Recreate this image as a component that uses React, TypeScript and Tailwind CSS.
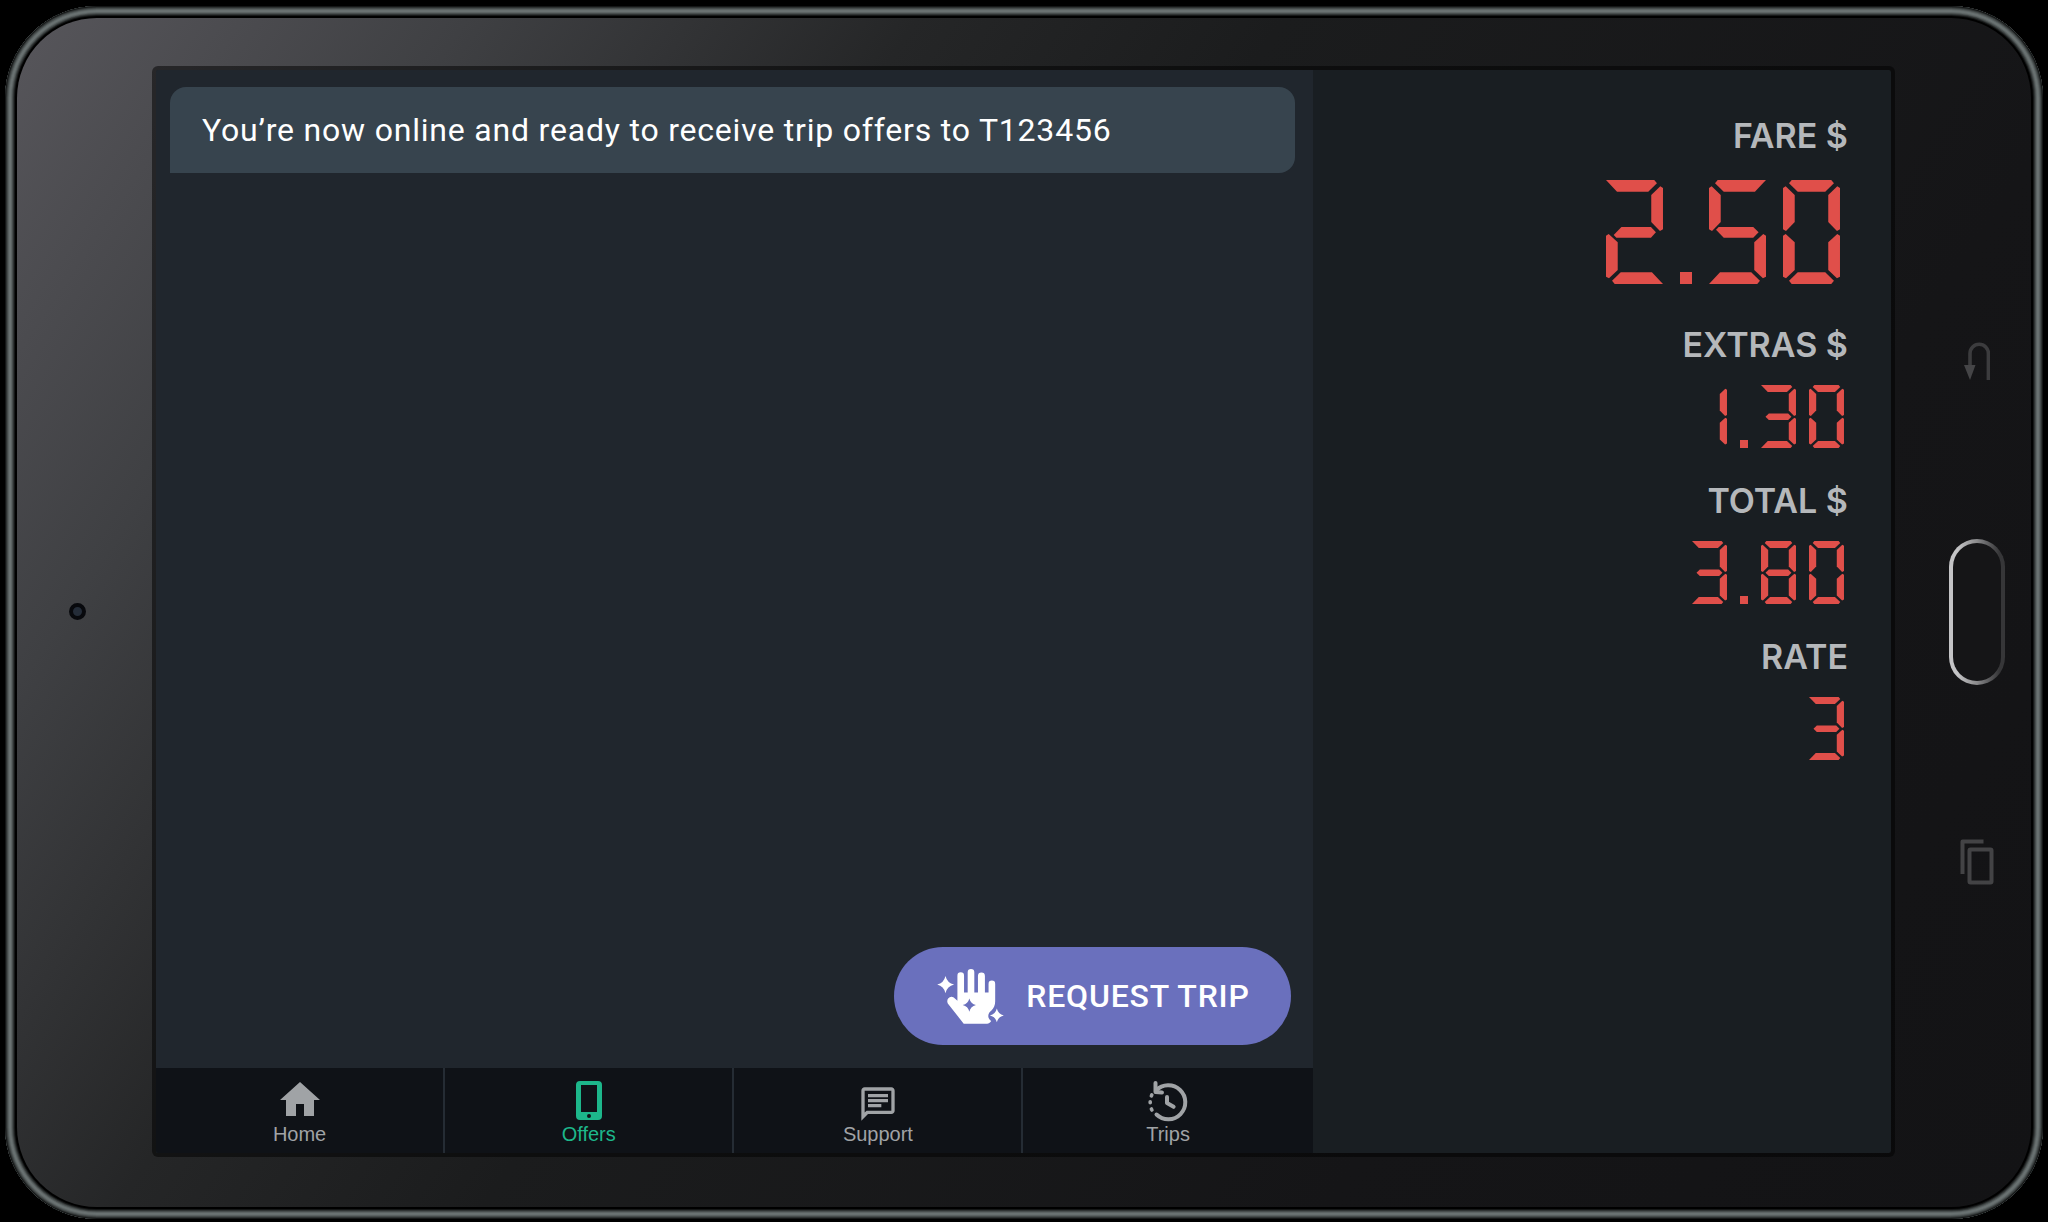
import React from "react";
import { MdHome, MdOutlineChat } from "react-icons/md";

type Point = [number, number];

const DIGIT_W = 170;
const DIGIT_H = 312;

const segments: Record<string, Point[]> = {
  top: [[18, 10], [26, 0], [144, 0], [152, 10], [126, 35], [44, 35]],
  topOpenLeft: [[0, 0], [144, 0], [152, 10], [126, 35], [33, 35]],
  topOpenRight: [[18, 10], [26, 0], [170, 0], [137, 35], [44, 35]],
  upperLeft: [[0, 24], [8, 19], [35, 45], [35, 126], [9, 153], [0, 148]],
  upperRight: [[170, 24], [162, 19], [135, 45], [135, 126], [161, 153], [170, 148]],
  middle: [[22, 157], [38, 141], [132, 141], [148, 157], [132, 173], [38, 173]],
  middleRising: [[23, 165], [46, 141], [134, 141], [149, 157], [134, 173], [31, 173]],
  middleFalling: [[21, 149], [29, 141], [132, 141], [148, 157], [132, 173], [44, 173]],
  lowerLeft: [[0, 167], [8, 162], [35, 187], [35, 270], [9, 295], [0, 290]],
  lowerRight: [[170, 167], [162, 162], [135, 187], [135, 270], [161, 295], [170, 290]],
  bottom: [[18, 302], [26, 312], [144, 312], [152, 302], [126, 277], [44, 277]],
  bottomOpenLeft: [[0, 312], [144, 312], [152, 302], [126, 277], [33, 277]],
  bottomOpenRight: [[18, 302], [26, 312], [170, 312], [137, 277], [44, 277]],
};

const lit: Record<string, string[]> = {
  "0": ["top", "upperLeft", "upperRight", "lowerLeft", "lowerRight", "bottom"],
  "1": ["upperRight", "lowerRight"],
  "2": ["topOpenLeft", "upperRight", "middleRising", "lowerLeft", "bottomOpenRight"],
  "3": ["topOpenLeft", "upperRight", "middle", "lowerRight", "bottomOpenLeft"],
  "5": ["topOpenRight", "upperLeft", "middleFalling", "lowerRight", "bottomOpenLeft"],
  "8": ["top", "upperLeft", "upperRight", "middle", "lowerLeft", "lowerRight", "bottom"],
};

function toClipPath(points: Point[]) {
  return `polygon(${points.map(([x, y]) => `${(x / DIGIT_W) * 100}% ${(y / DIGIT_H) * 100}%`).join(", ")})`;
}

function Readout({ value, large = false }: { value: string; large?: boolean }) {
  return (
    <dd>
      <span
        role="img"
        aria-label={value}
        className={large ? "flex items-end gap-[17px] pr-2" : "flex items-end gap-[13px] pr-1"}
      >
        {value.split("").map((char, i) =>
          char === "." ? (
            <span key={i} className={large ? "size-3 bg-[#e04f4a]" : "size-2 bg-[#e04f4a]"} />
          ) : (
            <span key={i} className={large ? "grid h-[104px] w-[57px]" : "grid h-[63px] w-[35px]"}>
              {lit[char].map((name) => (
                <span
                  key={name}
                  className="col-start-1 row-start-1 bg-[#e04f4a]"
                  style={{ clipPath: toClipPath(segments[name]) }}
                />
              ))}
            </span>
          )
        )}
      </span>
    </dd>
  );
}

function MeterRow({ label, value, large = false }: { label: string; value: string; large?: boolean }) {
  return (
    <div className={large ? "flex flex-col items-end gap-6 pb-2" : "flex flex-col items-end gap-5"}>
      <dt className="font-['Inter',sans-serif] text-[34px] leading-10 font-semibold text-[#b5b8bb]">{label}</dt>
      <Readout value={value} large={large} />
    </div>
  );
}

function HandIcon() {
  return (
    <svg aria-hidden viewBox="0 0 201 166" className="h-[55px] w-[67px]">
      <path
        fill="#fff"
        d="M61 72V20a10 10 0 0 1 20 0V71h11V10a10 10 0 0 1 20 0V71h11V21a10 10 0 0 1 21 0V71h11V45a10 10 0 0 1 20 0V97c0 12-4 21-12 29a18 18 0 0 0 0 31l-3 4q-3 4-9 4H80L32 104C26 93 37 78 50 86L61 96Z"
      />
      <path fill="#fff" d="M25 21Q30 42 51 47Q30 52 25 73Q20 52 0 47Q20 42 25 21Z" />
      <path fill="#fff" d="M180 119Q184 136 201 140Q184 144 180 161Q176 144 159 140Q176 136 180 119Z" />
      <path fill="#6a70bd" d="M97 89Q101 105 117 109Q101 113 97 129Q93 113 77 109Q93 105 97 89Z" />
    </svg>
  );
}

function PhoneIcon() {
  return (
    <svg aria-hidden viewBox="0 0 48 48" className="size-12" fill="currentColor">
      <path
        fillRule="evenodd"
        d="M15 5H33a4 4 0 0 1 4 4V40a4 4 0 0 1-4 4H15a4 4 0 0 1-4-4V9a4 4 0 0 1 4-4ZM16 9V36H32V9ZM24 38a2 2 0 1 0 0 4 2 2 0 0 0 0-4Z"
      />
    </svg>
  );
}

function HistoryIcon() {
  return (
    <svg
      aria-hidden
      viewBox="1 0 48 48"
      className="size-12"
      fill="none"
      stroke="currentColor"
      strokeWidth="4"
      strokeLinecap="round"
      strokeLinejoin="round"
    >
      <path d="M13 14.5A17 17 0 1 1 13.5 38.5" />
      <path d="M12.500 7V16L19 16.6" />
      <path strokeWidth="3.6" d="M8.8 18.8L8.4 19.8M7.2 25.8V26.8M8.4 33L8.9 34" />
      <path d="M24 21V27L30.600 30.8" />
    </svg>
  );
}

const tabs = [
  { label: "Home", icon: <MdHome aria-hidden className="size-12" />, active: false },
  { label: "Offers", icon: <PhoneIcon />, active: true },
  { label: "Support", icon: <MdOutlineChat aria-hidden className="size-10" />, active: false },
  { label: "Trips", icon: <HistoryIcon />, active: false },
];

function TabBar() {
  return (
    <nav className="grid grid-cols-4 divide-x-2 divide-[#252c34] bg-[#0f1217]">
      {tabs.map((tab) => (
        <button
          key={tab.label}
          type="button"
          aria-current={tab.active ? "page" : undefined}
          className={
            tab.active
              ? "flex flex-col items-center pt-2 pb-[9px] text-[#1db78b]"
              : "flex flex-col items-center pt-2 pb-[9px] text-[#a0a3a6]"
          }
        >
          <span className="flex h-12 items-end">{tab.icon}</span>
          <span className="font-['Liberation_Sans',sans-serif] text-xl leading-5">{tab.label}</span>
        </button>
      ))}
    </nav>
  );
}

function HardwareKeys() {
  return (
    <div className="flex w-[136px] flex-col items-center justify-center gap-[153px] pl-7">
      <button type="button" aria-label="Back" className="flex size-12 justify-center pt-1">
        <svg aria-hidden viewBox="0 0 26 38" className="h-[38px] w-[26px]">
          <path d="M6 25V11.5a9.2 9.2 0 0 1 18.4 0V38" fill="none" stroke="#3c3c3e" strokeWidth="3.6" />
          <path d="M0 23H11.5L6 38Z" fill="#454547" />
        </svg>
      </button>
      <button
        type="button"
        aria-label="Home"
        className="h-[146px] w-14 rounded-full bg-linear-to-r from-[#c4c4c6] from-15% via-[#8a8a8c] via-50% to-[#363638] to-90% p-1"
      >
        <span className="block size-full rounded-full bg-[#151517]" />
      </button>
      <button type="button" aria-label="Recent apps" className="flex size-12 items-center justify-center">
        <svg aria-hidden viewBox="0 0 34 46" className="h-[46px] w-[34px]" fill="none" stroke="#434345" strokeWidth="4">
          <path d="M2.5 35V2.5H23.5" strokeLinejoin="round" />
          <rect x="9.5" y="10.5" width="22" height="33" rx="1" />
        </svg>
      </button>
    </div>
  );
}

export default function App() {
  return (
    <div className="flex min-h-screen bg-black px-[5px] pt-[6px] pb-[3px]">
      <div className="flex flex-1 rounded-[92px] p-3 shadow-[inset_0_0_0_1px_#141616,inset_0_0_0_2px_#2e3232,inset_0_0_0_3px_#454b4b,inset_0_0_0_4px_#5a6161,inset_0_0_0_5px_#687070,inset_0_0_0_6px_#6a7272,inset_0_0_0_7px_#5d6464,inset_0_0_0_8px_#474d4d,inset_0_0_0_9px_#2f3333,inset_0_0_0_10px_#151717]">
        <div className="flex flex-1 rounded-[80px] bg-[linear-gradient(124deg,#57565b_0%,#3f4043_16%,#252627_32%,#1b1c1d_45%,#151517_75%,#131315_100%)] pt-12 pb-[50px]">
          <div className="flex w-[135px] items-center justify-center pr-[14px]">
            <span className="size-[17px] rounded-full border-4 border-[#08090d] bg-[#242c38]" />
          </div>

          <main className="grid flex-1 grid-cols-3 overflow-hidden rounded-md border-4 border-black/50 bg-[#191e22] bg-clip-padding">
            <section className="col-span-2 flex flex-col bg-[#20262d]">
              <div className="flex flex-1 flex-col justify-between pt-[17px] pr-[18px] pb-[23px] pl-[14px]">
                <p className="rounded-2xl rounded-bl-none bg-[#37444e] px-8 py-[23px] font-['Roboto',sans-serif] text-[32px] leading-10 tracking-wide text-white">
                  You’re now online and ready to receive trip offers to T123456
                </p>
                <button
                  type="button"
                  className="mr-1 flex h-[98px] items-center gap-[22px] self-end rounded-full bg-[#6a70bd] pr-[41px] pl-[43px] font-['Roboto',sans-serif] text-[32px] leading-10 font-medium tracking-wide text-white"
                >
                  <HandIcon />
                  REQUEST TRIP
                </button>
              </div>
              <TabBar />
            </section>

            <aside>
              <dl className="flex flex-col gap-[33px] pt-[46px] pr-[43px]">
                <MeterRow label="FARE $" value="2.50" large />
                <MeterRow label="EXTRAS $" value="1.30" />
                <MeterRow label="TOTAL $" value="3.80" />
                <MeterRow label="RATE" value="3" />
              </dl>
            </aside>
          </main>

          <HardwareKeys />
        </div>
      </div>
    </div>
  );
}
